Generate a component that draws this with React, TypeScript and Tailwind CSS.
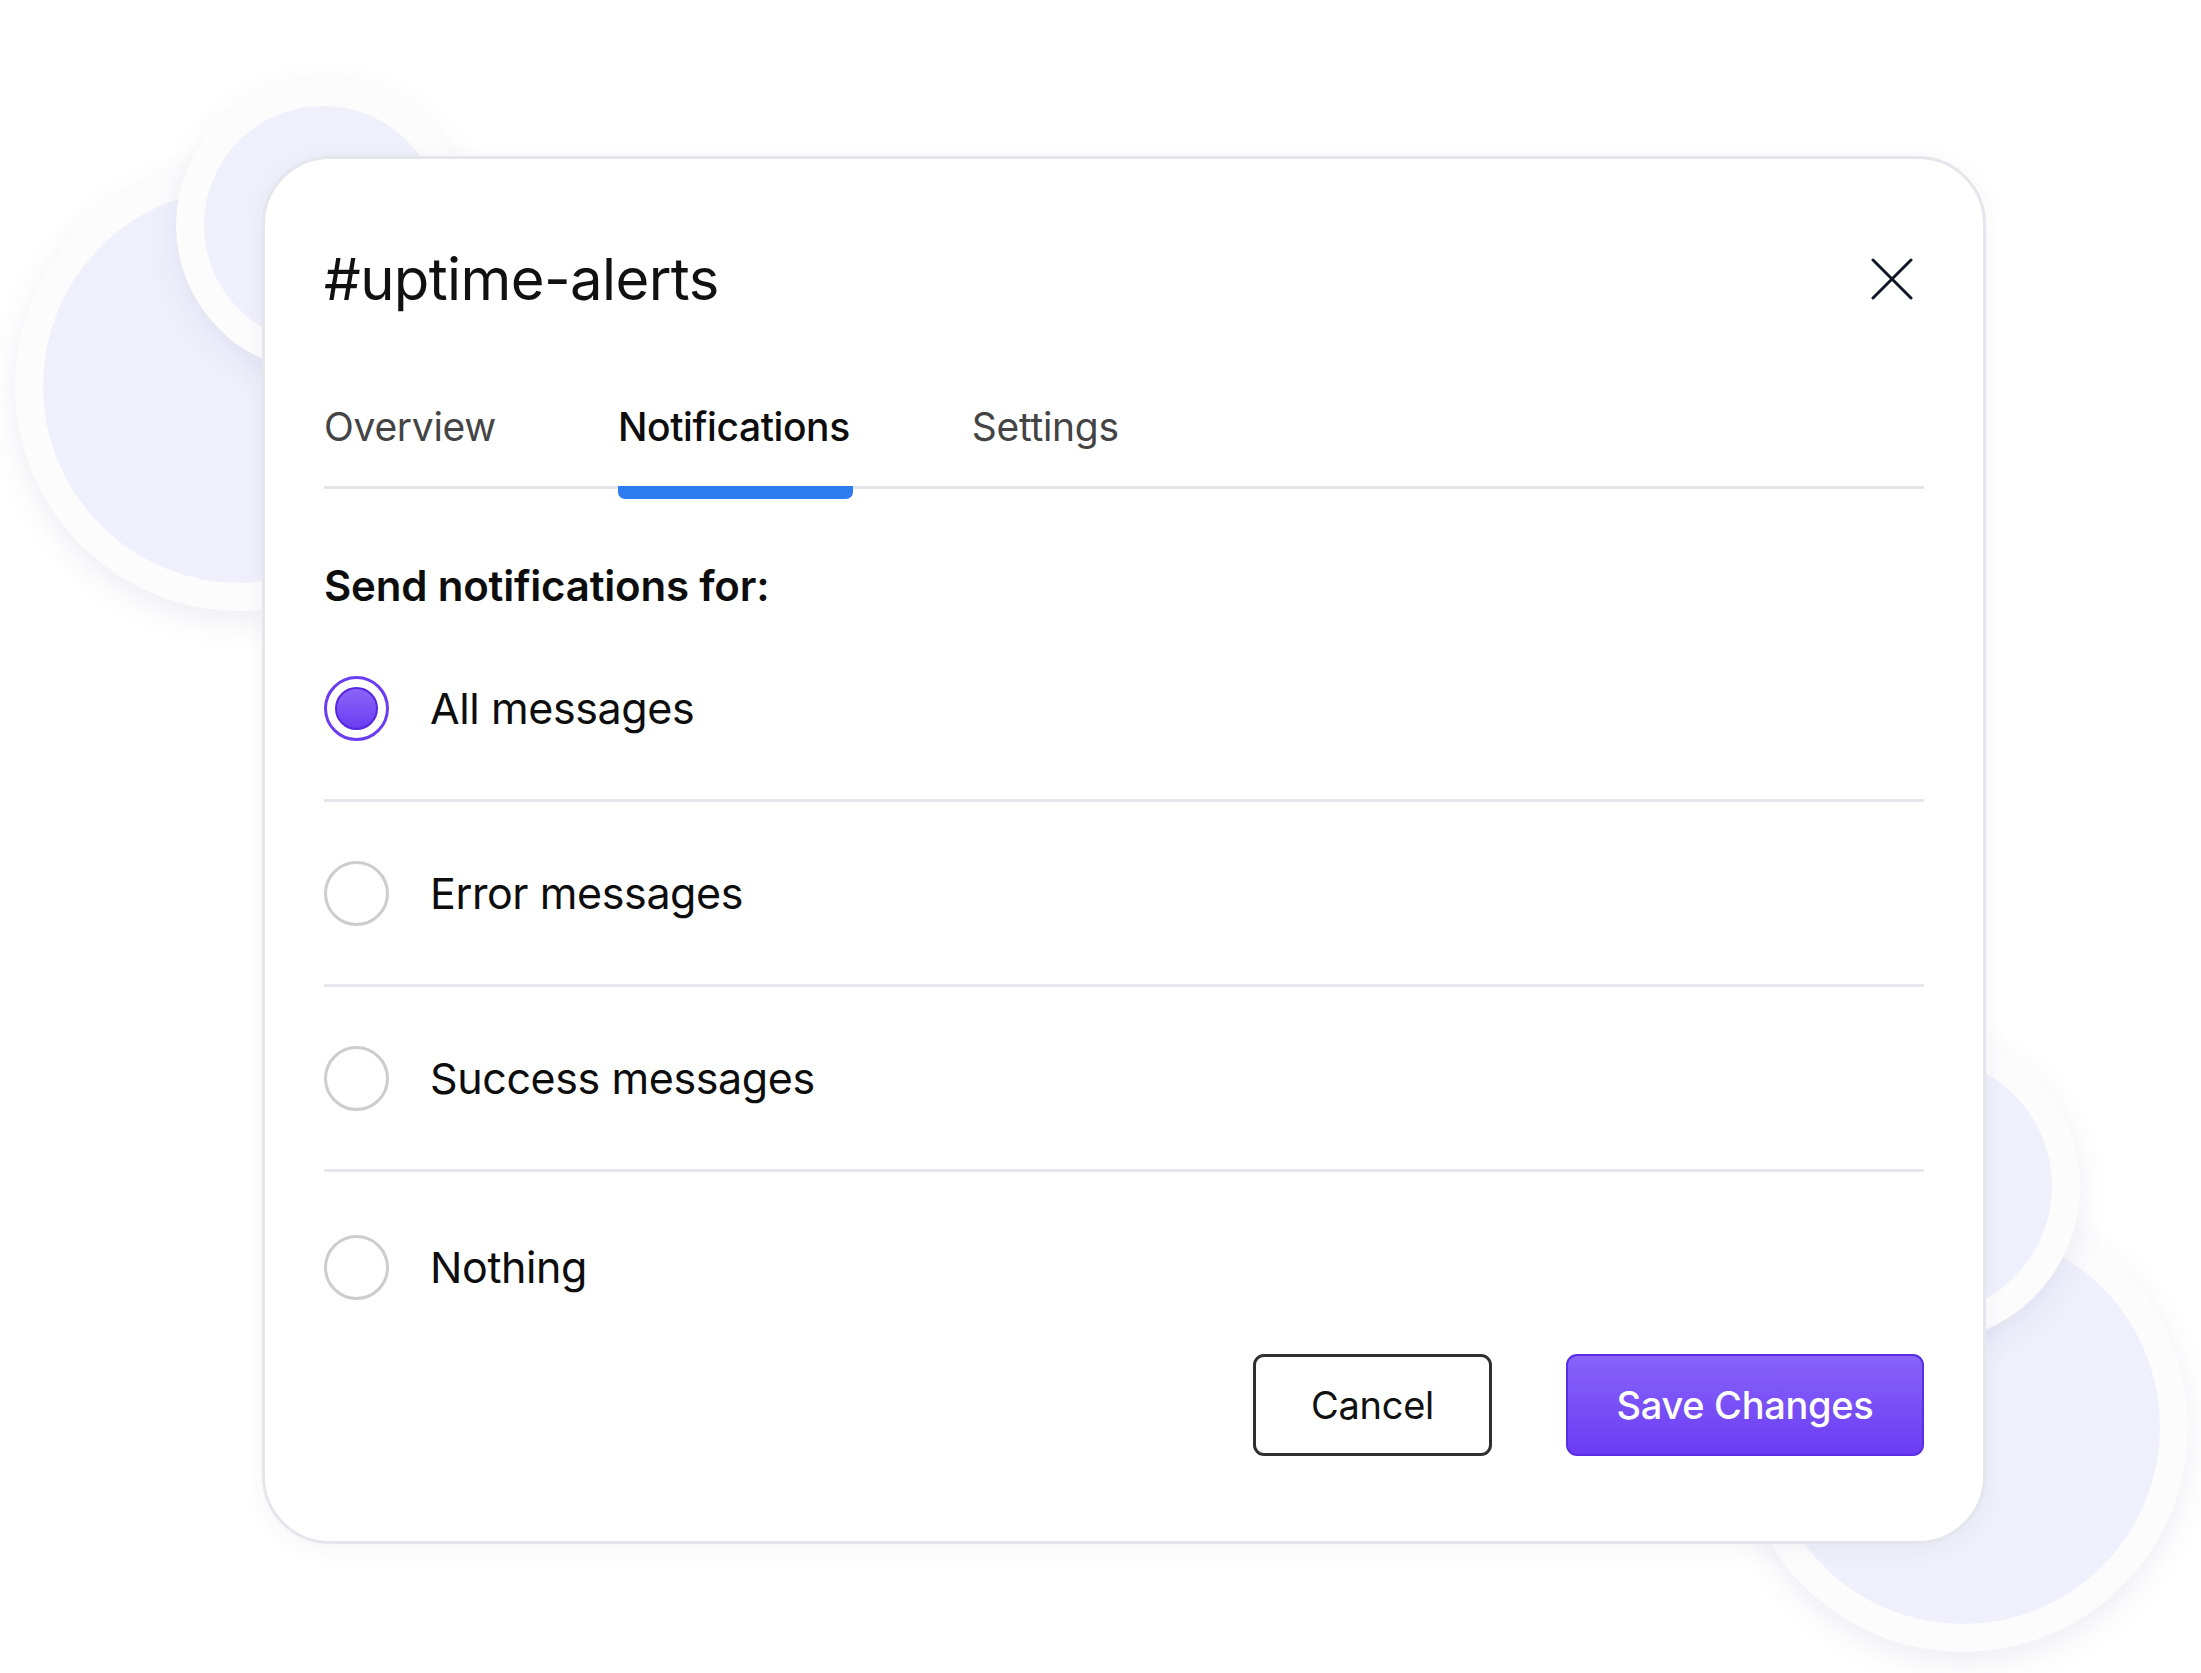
const options = ['All messages', 'Error messages', 'Success messages', 'Nothing'];

function Blob({ className }: { className: string }) {
  return (
    <div
      className={`absolute rounded-full bg-[#f0f0fc] border-[#fcfcfd] shadow-[0_10px_30px_rgba(90,90,150,0.10)] ${className}`}
    />
  );
}

function Radio({ checked }: { checked: boolean }) {
  if (checked) {
    return (
      <div className="w-[65px] h-[65px] shrink-0 rounded-full border-[3px] border-[#6a3df0] bg-white flex items-center justify-center">
        <div className="w-[43px] h-[43px] rounded-full border-[2px] border-[#5626e0] bg-gradient-to-b from-[#8a64f8] to-[#6c3cf2]" />
      </div>
    );
  }
  return <div className="w-[65px] h-[65px] shrink-0 rounded-full border-[3px] border-[#cdcdcd] bg-white" />;
}

export default function App() {
  return (
    <div
      className="relative w-[2201px] h-[1673px] bg-white overflow-hidden"
      style={{ fontFamily: 'Inter, "Noto Sans", sans-serif' }}
    >
      {/* background circles */}
      <Blob className="left-[15px] top-[161px] w-[450px] h-[450px] border-[28px]" />
      <Blob className="left-[176px] top-[78px] w-[294px] h-[294px] border-[28px]" />
      <Blob className="left-[1738px] top-[1202px] w-[450px] h-[450px] border-[28px]" />
      <Blob className="left-[1766px] top-[1029px] w-[314px] h-[314px] border-[28px]" />

      {/* dialog */}
      <div className="relative ml-[262px] mt-[156px] w-[1724px] rounded-[68px] border-[3px] border-[#e4e6ec] bg-white px-[59px] pt-[80px] pb-[85px] shadow-[0_4px_24px_rgba(60,60,90,0.05)]">
        <div className="flex items-center justify-between h-[80px]">
          <h1 className="text-[58px] leading-none text-[#111111] tracking-[-0.6px]">#uptime-alerts</h1>
          <button className="w-[64px] h-[64px] flex items-center justify-center text-[#101828]">
            <svg width="42" height="42" viewBox="0 0 42 42" fill="none" stroke="currentColor" strokeWidth="3" strokeLinecap="round">
              <path d="M2 2 L40 40" />
              <path d="M40 2 L2 40" />
            </svg>
          </button>
        </div>

        {/* tabs */}
        <div className="mt-[85px] flex gap-[122px] border-b-[3px] border-[#e3e5ea]">
          <div className="pb-[36px] text-[39px] leading-[46px] text-[#444444] tracking-[-0.3px]">Overview</div>
          <div className="relative pb-[36px] text-[39px] leading-[46px] text-[#0d0d0d] font-medium tracking-[-0.4px]">
            Notifications
            <div className="absolute left-0 right-[-3px] top-full h-[13px] rounded-b-[7px] bg-[#2f7cf0]" />
          </div>
          <div className="pb-[36px] text-[39px] leading-[46px] text-[#444444] tracking-[-0.3px]">Settings</div>
        </div>

        <div className="mt-[73px] text-[42px] leading-[48px] font-semibold text-[#0d0d0d] tracking-[-0.2px]">
          Send notifications for:
        </div>

        <div className="mt-[7px] flex flex-col">
          {options.map((label, i) => (
            <div key={label}>
              {i > 0 && <div className="h-[3px] bg-[#e6e7ee]" />}
              <div className={`flex items-center gap-[41px] ${i === 3 ? 'h-[190px]' : 'h-[182px]'}`}>
                <Radio checked={i === 0} />
                <span className="text-[43px] leading-none text-[#0d0d0d] tracking-[-0.4px]">{label}</span>
              </div>
            </div>
          ))}
        </div>

        <div className="-mt-[8px] flex justify-end gap-[74px]">
          <button className="w-[239px] h-[102px] rounded-[11px] border-[3px] border-[#2f2f2f] bg-white text-[38px] text-[#111111] tracking-[-0.3px]">
            Cancel
          </button>
          <button className="w-[358px] h-[102px] rounded-[11px] border-[2px] border-[#5a2ee6] bg-gradient-to-b from-[#8862fa] to-[#6b3bf3] text-[38px] font-medium text-white tracking-[-0.3px]">
            Save Changes
          </button>
        </div>
      </div>
    </div>
  );
}
